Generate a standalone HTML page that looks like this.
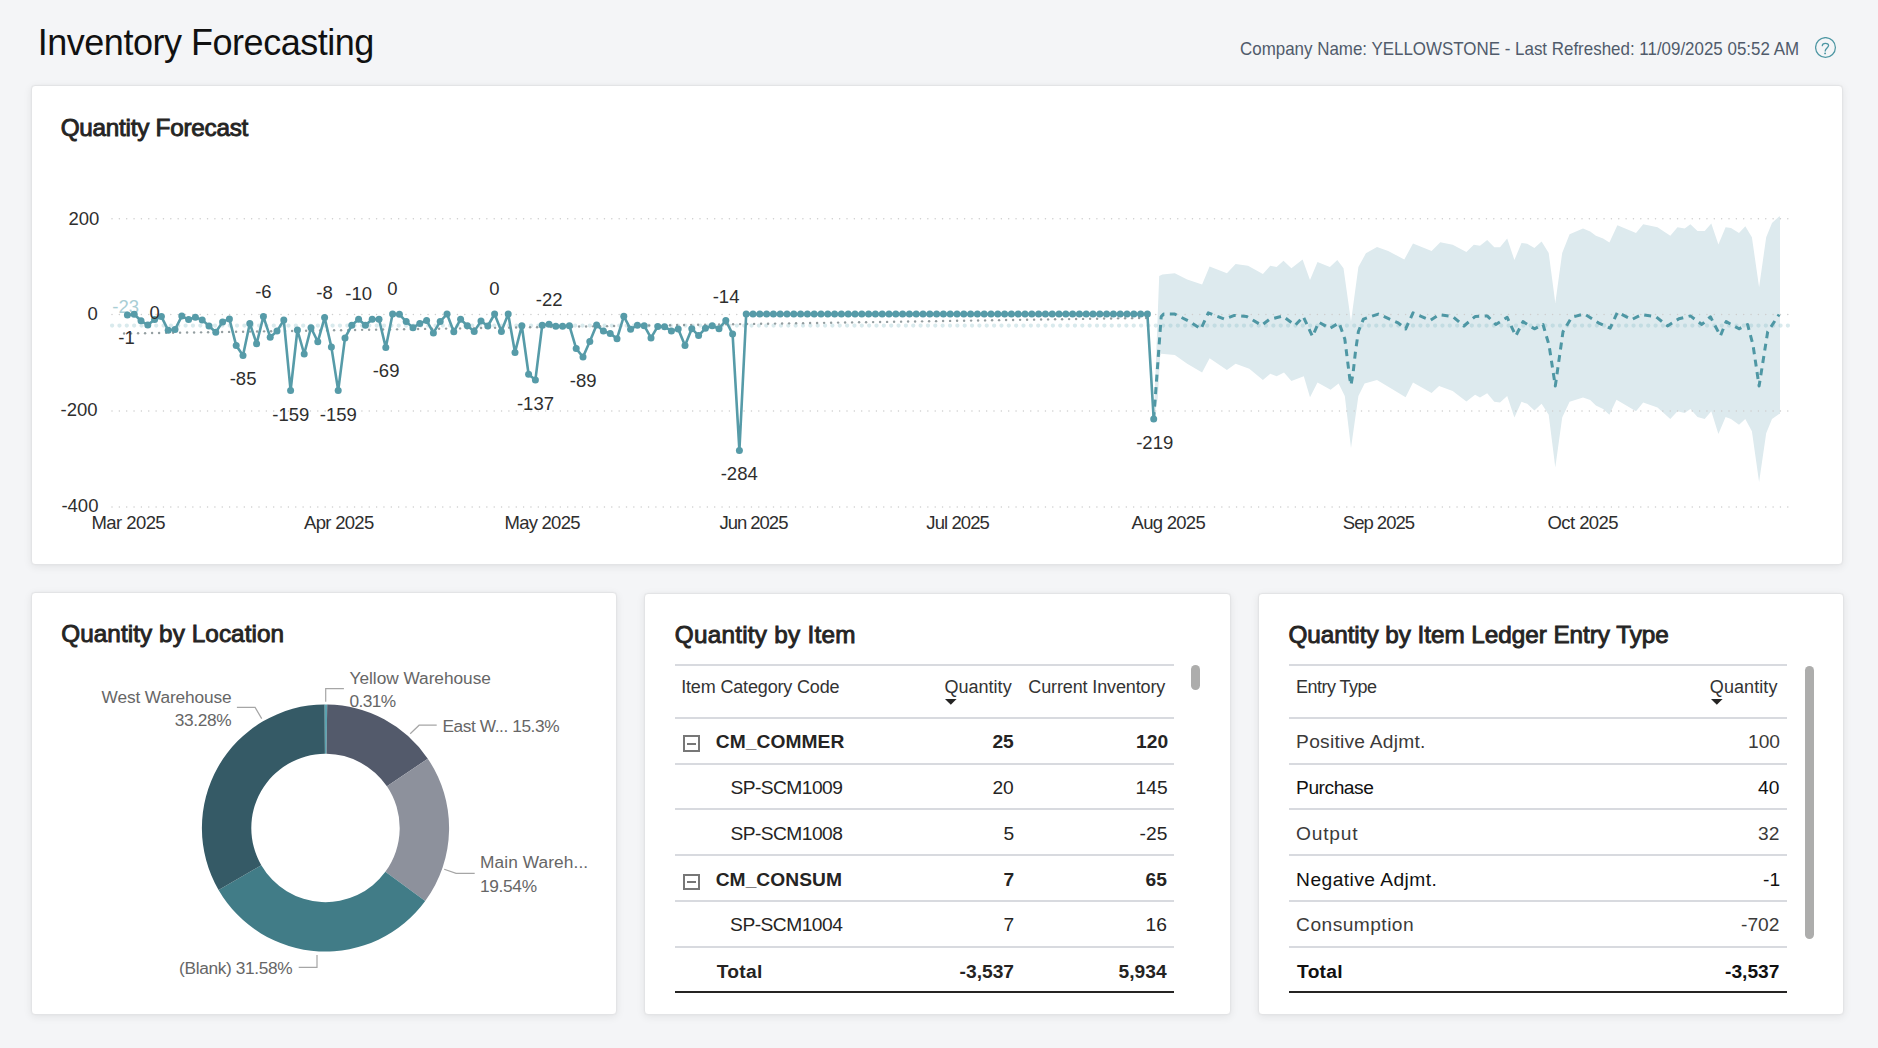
<!DOCTYPE html>
<html><head><meta charset="utf-8"><title>Inventory Forecasting</title><style>
*{margin:0;padding:0;box-sizing:border-box}
html,body{width:1878px;height:1048px;overflow:hidden;background:#F4F5F7;font-family:"Liberation Sans", sans-serif;}
.card{position:absolute;background:#fff;border:1px solid #E3E4E6;border-radius:4px;box-shadow:0 2px 8px rgba(0,0,0,0.075),0 0 2px rgba(0,0,0,0.03);}
.t{position:absolute;white-space:nowrap;line-height:1;}
svg text{font-family:"Liberation Sans", sans-serif;}
.ax{font-size:17px;fill:#333;}
.dl{font-size:16.7px;fill:#252423;}
.pl{font-size:17px;fill:#666;}
.ttl{font-size:23px;font-weight:700;color:#252423;}
.ln{position:absolute;}
.cell{position:absolute;white-space:nowrap;line-height:1;font-size:18px;color:#252423;}
</style></head>
<body>
<div class="card" style="left:31px;top:85px;width:1812.0px;height:480.0px"></div><div class="card" style="left:31px;top:592px;width:586.0px;height:423.0px"></div><div class="card" style="left:644px;top:593px;width:587.0px;height:422.0px"></div><div class="card" style="left:1258px;top:593px;width:586.0px;height:422.0px"></div><div class="t" style="left:112.3px;top:298.34px;font-size:18.5px;color:#A9CED5;">-23</div><svg style="position:absolute;left:0;top:0" width="1878" height="1048" viewBox="0 0 1878 1048"><path d="M1153.7,419.5 L1159.2,276.0 L1162.4,274.4 L1174.8,273.2 L1187.2,279.4 L1202.1,284.4 L1209.6,266.5 L1226.9,273.2 L1235.6,264.0 L1248.0,265.8 L1262.9,273.9 L1270.3,265.8 L1276.6,267.0 L1283.5,260.8 L1291.4,268.2 L1302.6,259.6 L1310.0,279.9 L1317.5,262.0 L1329.9,267.0 L1337.3,260.0 L1343.5,268.2 L1351.0,321.6 L1358.4,267.0 L1365.9,253.3 L1377.0,247.1 L1388.2,250.9 L1404.3,259.6 L1413.0,243.4 L1431.6,250.9 L1440.3,242.2 L1452.7,244.7 L1466.4,252.1 L1473.8,244.7 L1480.0,245.8 L1487.2,240.1 L1494.3,247.2 L1500.0,247.2 L1507.2,238.6 L1514.4,260.1 L1521.5,242.9 L1527.2,243.8 L1534.4,248.1 L1541.6,241.5 L1548.7,252.9 L1555.3,303.0 L1562.2,252.9 L1569.6,234.3 L1583.0,228.6 L1590.2,231.5 L1595.9,235.8 L1603.1,238.6 L1609.4,242.4 L1617.4,225.2 L1636.0,232.9 L1643.2,224.3 L1657.5,227.2 L1670.3,235.8 L1677.5,227.2 L1684.7,228.6 L1690.4,224.3 L1697.5,230.9 L1704.7,230.9 L1711.3,223.5 L1718.4,244.4 L1725.6,227.2 L1731.0,228.0 L1739.0,232.9 L1745.3,226.3 L1751.9,237.2 L1759.1,287.3 L1766.2,237.2 L1772.0,222.9 L1779.1,216.6 L1780.0,216.6 L1780.0,414.1 L1779.1,414.1 L1772.0,419.0 L1766.2,433.3 L1759.1,481.9 L1751.9,431.3 L1745.3,419.0 L1739.0,424.7 L1731.0,419.0 L1725.6,417.0 L1718.4,434.1 L1711.3,411.2 L1704.7,419.0 L1697.5,417.0 L1690.4,408.9 L1684.7,413.0 L1677.5,411.2 L1670.3,419.0 L1657.5,407.5 L1643.2,402.6 L1636.0,411.2 L1616.5,399.8 L1609.4,414.7 L1603.1,409.0 L1595.9,405.5 L1590.2,400.0 L1583.0,397.5 L1569.6,401.8 L1562.2,417.5 L1555.3,467.6 L1548.7,414.7 L1541.6,403.8 L1534.4,410.4 L1527.2,403.8 L1521.5,401.8 L1514.4,417.5 L1507.2,396.0 L1500.0,402.6 L1494.3,401.8 L1487.2,393.2 L1480.0,397.5 L1475.1,394.8 L1466.4,401.5 L1452.7,391.1 L1439.1,386.1 L1431.6,393.0 L1413.0,382.4 L1405.6,397.3 L1392.0,389.1 L1377.0,379.9 L1364.6,383.6 L1358.4,396.0 L1351.0,448.1 L1344.8,396.0 L1338.6,383.6 L1330.6,389.8 L1317.5,382.4 L1310.0,397.3 L1303.8,376.2 L1291.4,381.1 L1284.0,372.5 L1276.6,376.2 L1270.3,373.7 L1262.9,379.9 L1249.3,368.7 L1235.6,363.8 L1226.9,370.0 L1209.6,358.3 L1202.1,372.5 L1187.2,363.8 L1174.8,355.1 L1161.2,353.8 L1160.2,356.0 L1157.8,398.0 L1153.7,419.5 Z" fill="#DDEAEE"/><line x1="112" y1="218.7" x2="1792" y2="218.7" stroke="#CDCDCD" stroke-width="1.5" stroke-linecap="round" stroke-dasharray="0 7.35"/><line x1="112" y1="314.6" x2="1792" y2="314.6" stroke="#CDCDCD" stroke-width="1.5" stroke-linecap="round" stroke-dasharray="0 7.35"/><line x1="112" y1="410.9" x2="1792" y2="410.9" stroke="#CDCDCD" stroke-width="1.5" stroke-linecap="round" stroke-dasharray="0 7.35"/><line x1="112" y1="507.1" x2="1792" y2="507.1" stroke="#CDCDCD" stroke-width="1.5" stroke-linecap="round" stroke-dasharray="0 7.35"/><line x1="112.1" y1="325.6" x2="1792" y2="325.6" stroke="rgb(145,192,203)" stroke-opacity="0.34" stroke-width="4.3" stroke-linecap="round" stroke-dasharray="0 7.35"/><g fill="#7A878A" opacity="0.8"><circle cx="124.1" cy="333.50" r="1.2"/><circle cx="131.1" cy="333.39" r="1.2"/><circle cx="138.1" cy="333.29" r="1.2"/><circle cx="145.1" cy="333.18" r="1.2"/><circle cx="152.1" cy="333.07" r="1.2"/><circle cx="159.1" cy="332.97" r="1.2"/><circle cx="166.1" cy="332.86" r="1.2"/><circle cx="173.1" cy="332.75" r="1.2"/><circle cx="180.1" cy="332.65" r="1.2"/><circle cx="187.1" cy="332.54" r="1.2"/><circle cx="194.1" cy="332.43" r="1.2"/><circle cx="201.1" cy="332.33" r="1.2"/><circle cx="208.1" cy="332.22" r="1.2"/><circle cx="215.1" cy="332.11" r="1.2"/><circle cx="222.1" cy="332.01" r="1.2"/><circle cx="229.1" cy="331.90" r="1.2"/><circle cx="236.1" cy="331.79" r="1.2"/><circle cx="243.1" cy="331.69" r="1.2"/><circle cx="250.1" cy="331.58" r="1.2"/><circle cx="257.1" cy="331.47" r="1.2"/><circle cx="264.1" cy="331.37" r="1.2"/><circle cx="271.1" cy="331.26" r="1.2"/><circle cx="278.1" cy="331.15" r="1.2"/><circle cx="285.1" cy="331.05" r="1.2"/><circle cx="292.1" cy="330.94" r="1.2"/><circle cx="299.1" cy="330.83" r="1.2"/><circle cx="306.1" cy="330.73" r="1.2"/><circle cx="313.1" cy="330.62" r="1.2"/><circle cx="320.1" cy="330.51" r="1.2"/><circle cx="327.1" cy="330.41" r="1.2"/><circle cx="334.1" cy="330.30" r="1.2"/><circle cx="341.1" cy="330.19" r="1.2"/><circle cx="348.1" cy="330.09" r="1.2"/><circle cx="355.1" cy="329.98" r="1.2"/><circle cx="362.1" cy="329.87" r="1.2"/><circle cx="369.1" cy="329.77" r="1.2"/><circle cx="376.1" cy="329.66" r="1.2"/><circle cx="383.1" cy="329.55" r="1.2"/><circle cx="390.1" cy="329.45" r="1.2"/><circle cx="397.1" cy="329.34" r="1.2"/><circle cx="404.1" cy="329.23" r="1.2"/><circle cx="411.1" cy="329.13" r="1.2"/><circle cx="418.1" cy="329.02" r="1.2"/><circle cx="425.1" cy="328.91" r="1.2"/><circle cx="432.1" cy="328.81" r="1.2"/><circle cx="439.1" cy="328.70" r="1.2"/><circle cx="446.1" cy="328.59" r="1.2"/><circle cx="453.1" cy="328.49" r="1.2"/><circle cx="460.1" cy="328.38" r="1.2"/><circle cx="467.1" cy="328.27" r="1.2"/><circle cx="474.1" cy="328.17" r="1.2"/><circle cx="481.1" cy="328.06" r="1.2"/><circle cx="488.1" cy="327.95" r="1.2"/><circle cx="495.1" cy="327.85" r="1.2"/><circle cx="502.1" cy="327.74" r="1.2"/><circle cx="509.1" cy="327.63" r="1.2"/><circle cx="516.1" cy="327.53" r="1.2"/><circle cx="523.1" cy="327.42" r="1.2"/><circle cx="530.1" cy="327.31" r="1.2"/><circle cx="537.1" cy="327.21" r="1.2"/><circle cx="544.1" cy="327.10" r="1.2"/><circle cx="551.1" cy="326.99" r="1.2"/><circle cx="558.1" cy="326.89" r="1.2"/><circle cx="565.1" cy="326.78" r="1.2"/><circle cx="572.1" cy="326.67" r="1.2"/><circle cx="579.1" cy="326.57" r="1.2"/><circle cx="586.1" cy="326.46" r="1.2"/><circle cx="593.1" cy="326.35" r="1.2"/><circle cx="600.1" cy="326.25" r="1.2"/><circle cx="607.1" cy="326.14" r="1.2"/><circle cx="614.1" cy="326.03" r="1.2"/><circle cx="621.1" cy="325.93" r="1.2"/><circle cx="628.1" cy="325.82" r="1.2"/><circle cx="635.1" cy="325.71" r="1.2"/><circle cx="642.1" cy="325.61" r="1.2"/><circle cx="649.1" cy="325.50" r="1.2"/><circle cx="656.1" cy="325.39" r="1.2"/><circle cx="663.1" cy="325.29" r="1.2"/><circle cx="670.1" cy="325.18" r="1.2"/><circle cx="677.1" cy="325.07" r="1.2"/><circle cx="684.1" cy="324.97" r="1.2"/><circle cx="691.1" cy="324.86" r="1.2"/><circle cx="698.1" cy="324.75" r="1.2"/><circle cx="705.1" cy="324.65" r="1.2"/><circle cx="712.1" cy="324.54" r="1.2"/><circle cx="719.1" cy="324.43" r="1.2"/><circle cx="726.1" cy="324.33" r="1.2"/><circle cx="733.1" cy="324.22" r="1.2"/><circle cx="740.1" cy="324.11" r="1.2"/><circle cx="747.1" cy="324.01" r="1.2"/><circle cx="754.1" cy="323.90" r="1.2"/><circle cx="761.1" cy="323.79" r="1.2"/><circle cx="768.1" cy="323.69" r="1.2"/><circle cx="775.1" cy="323.58" r="1.2"/><circle cx="782.1" cy="323.47" r="1.2"/><circle cx="789.1" cy="323.37" r="1.2"/><circle cx="796.1" cy="323.26" r="1.2"/><circle cx="803.1" cy="323.15" r="1.2"/><circle cx="810.1" cy="323.05" r="1.2"/><circle cx="817.1" cy="322.94" r="1.2"/><circle cx="824.1" cy="322.83" r="1.2"/><circle cx="831.1" cy="322.73" r="1.2"/><circle cx="838.1" cy="322.62" r="1.2"/><circle cx="845.1" cy="322.51" r="1.2"/><circle cx="852.1" cy="322.41" r="1.2"/><circle cx="859.1" cy="322.30" r="1.2"/><circle cx="866.1" cy="322.19" r="1.2"/><circle cx="873.1" cy="322.09" r="1.2"/><circle cx="880.1" cy="321.98" r="1.2"/><circle cx="887.1" cy="321.88" r="1.2"/><circle cx="894.1" cy="321.77" r="1.2"/><circle cx="901.1" cy="321.66" r="1.2"/><circle cx="908.1" cy="321.56" r="1.2"/><circle cx="915.1" cy="321.45" r="1.2"/><circle cx="922.1" cy="321.34" r="1.2"/><circle cx="929.1" cy="321.24" r="1.2"/><circle cx="936.1" cy="321.13" r="1.2"/><circle cx="943.1" cy="321.02" r="1.2"/><circle cx="950.1" cy="320.92" r="1.2"/><circle cx="957.1" cy="320.81" r="1.2"/><circle cx="964.1" cy="320.70" r="1.2"/><circle cx="971.1" cy="320.60" r="1.2"/><circle cx="978.1" cy="320.49" r="1.2"/><circle cx="985.1" cy="320.38" r="1.2"/><circle cx="992.1" cy="320.28" r="1.2"/><circle cx="999.1" cy="320.17" r="1.2"/><circle cx="1006.1" cy="320.06" r="1.2"/><circle cx="1013.1" cy="319.96" r="1.2"/><circle cx="1020.1" cy="319.85" r="1.2"/><circle cx="1027.1" cy="319.74" r="1.2"/><circle cx="1034.1" cy="319.64" r="1.2"/><circle cx="1041.1" cy="319.53" r="1.2"/><circle cx="1048.1" cy="319.42" r="1.2"/><circle cx="1055.1" cy="319.32" r="1.2"/><circle cx="1062.1" cy="319.21" r="1.2"/><circle cx="1069.1" cy="319.10" r="1.2"/><circle cx="1076.1" cy="319.00" r="1.2"/><circle cx="1083.1" cy="318.89" r="1.2"/><circle cx="1090.1" cy="318.78" r="1.2"/><circle cx="1097.1" cy="318.68" r="1.2"/><circle cx="1104.1" cy="318.57" r="1.2"/><circle cx="1111.1" cy="318.46" r="1.2"/><circle cx="1118.1" cy="318.36" r="1.2"/><circle cx="1125.1" cy="318.25" r="1.2"/><circle cx="1132.1" cy="318.14" r="1.2"/><circle cx="1139.1" cy="318.04" r="1.2"/><circle cx="1146.1" cy="317.93" r="1.2"/></g><path d="M1153.7,419.1 L1161.2,316.6 L1163.6,314.1 L1174.8,314.1 L1189.7,321.6 L1200.9,329.0 L1208.3,312.9 L1224.4,319.1 L1234.4,315.4 L1246.8,316.6 L1261.7,325.3 L1269.1,319.6 L1282.8,316.1 L1295.2,325.3 L1303.3,316.6 L1312.5,336.5 L1318.7,322.1 L1329.9,328.5 L1339.1,322.8 L1344.8,339.0 L1347.3,358.8 L1349.8,378.7 L1351.0,384.9 L1353.0,373.7 L1355.5,351.4 L1358.4,331.5 L1363.4,319.1 L1378.3,314.1 L1398.1,322.8 L1405.6,329.0 L1413.0,312.9 L1430.4,320.3 L1439.1,314.6 L1452.7,316.6 L1463.9,326.0 L1475.1,316.6 L1487.2,315.9 L1495.8,324.5 L1507.2,317.3 L1515.8,335.9 L1523.0,321.6 L1534.4,328.8 L1543.0,324.5 L1549.0,345.0 L1555.3,386.0 L1563.0,331.7 L1571.6,317.3 L1584.5,313.9 L1598.8,323.1 L1610.2,328.2 L1617.4,312.2 L1631.7,319.6 L1641.7,314.5 L1656.0,316.8 L1667.5,325.9 L1678.9,318.8 L1690.4,315.9 L1701.8,324.5 L1710.4,316.8 L1720.4,335.9 L1726.2,321.6 L1739.0,328.8 L1747.6,324.5 L1753.0,345.0 L1759.1,386.0 L1767.7,331.7 L1779.1,314.5" fill="none" stroke="#4E97A4" stroke-width="3" stroke-dasharray="7 5.5" stroke-linejoin="round" stroke-linecap="butt"/><path d="M127.4,315.0 L134.2,314.3 L141.0,320.8 L147.8,325.0 L154.6,319.6 L161.4,316.6 L168.2,330.3 L175.0,329.5 L181.8,316.1 L188.6,319.6 L195.4,317.3 L202.2,319.9 L209.0,326.0 L215.8,332.3 L222.6,321.9 L229.4,318.9 L236.2,345.6 L243.0,355.5 L249.8,323.4 L256.6,343.7 L263.4,316.6 L270.2,337.2 L277.0,331.1 L283.8,320.1 L290.6,390.6 L297.4,330.0 L304.2,354.0 L311.0,327.7 L317.8,341.8 L324.6,317.6 L331.4,347.1 L338.2,390.6 L345.0,337.9 L351.8,325.3 L358.6,319.2 L365.4,325.3 L372.2,319.2 L379.0,319.2 L385.8,347.6 L392.6,314.0 L399.4,314.3 L406.2,321.6 L413.0,327.7 L419.8,323.4 L426.6,320.4 L433.4,332.9 L440.2,321.6 L447.0,314.0 L453.8,331.8 L460.6,319.2 L467.4,325.7 L474.2,331.4 L481.0,321.1 L487.8,326.0 L494.6,314.0 L501.4,331.4 L508.2,314.0 L515.0,352.4 L521.8,325.7 L528.6,374.3 L535.4,379.9 L542.2,325.3 L549.0,324.2 L555.8,326.2 L562.6,326.2 L569.4,325.7 L576.2,348.6 L583.0,357.0 L589.8,341.5 L596.6,325.0 L603.4,331.1 L610.2,333.4 L617.0,338.7 L623.8,316.3 L630.6,329.2 L637.4,325.3 L644.2,325.7 L651.0,337.9 L657.8,326.4 L664.6,326.7 L671.4,331.0 L678.2,328.9 L685.0,345.5 L691.8,328.7 L698.6,335.6 L705.4,328.3 L712.2,325.8 L719.0,328.7 L725.8,320.5 L732.6,334.1 L739.4,450.4 L746.2,314.0 L753.0,314.1 L759.8,314.1 L766.6,314.1 L773.4,314.1 L780.2,314.1 L787.0,314.1 L793.8,314.1 L800.6,314.1 L807.4,314.1 L814.2,314.1 L821.0,314.1 L827.8,314.1 L834.6,314.1 L841.4,314.1 L848.2,314.1 L855.0,314.1 L861.8,314.1 L868.6,314.1 L875.4,314.1 L882.2,314.1 L889.0,314.1 L895.8,314.1 L902.6,314.1 L909.4,314.1 L916.2,314.1 L923.0,314.1 L929.8,314.1 L936.6,314.1 L943.4,314.1 L950.2,314.1 L957.0,314.1 L963.8,314.1 L970.6,314.1 L977.4,314.1 L984.2,314.1 L991.0,314.1 L997.8,314.1 L1004.6,314.1 L1011.4,314.1 L1018.2,314.1 L1025.0,314.1 L1031.8,314.1 L1038.6,314.1 L1045.4,314.1 L1052.2,314.1 L1059.0,314.1 L1065.8,314.1 L1072.6,314.1 L1079.4,314.1 L1086.2,314.1 L1093.0,314.1 L1099.8,314.1 L1106.6,314.1 L1113.4,314.1 L1120.2,314.1 L1127.0,314.1 L1133.8,314.1 L1140.6,314.1 L1147.4,314.1 L1153.7,419.1" fill="none" stroke="#569BA8" stroke-width="2.6" stroke-linejoin="round"/><g fill="#569BA8"><circle cx="127.4" cy="315.0" r="3.5"/><circle cx="134.2" cy="314.3" r="3.5"/><circle cx="141.0" cy="320.8" r="3.5"/><circle cx="147.8" cy="325.0" r="3.5"/><circle cx="154.6" cy="319.6" r="3.5"/><circle cx="161.4" cy="316.6" r="3.5"/><circle cx="168.2" cy="330.3" r="3.5"/><circle cx="175.0" cy="329.5" r="3.5"/><circle cx="181.8" cy="316.1" r="3.5"/><circle cx="188.6" cy="319.6" r="3.5"/><circle cx="195.4" cy="317.3" r="3.5"/><circle cx="202.2" cy="319.9" r="3.5"/><circle cx="209.0" cy="326.0" r="3.5"/><circle cx="215.8" cy="332.3" r="3.5"/><circle cx="222.6" cy="321.9" r="3.5"/><circle cx="229.4" cy="318.9" r="3.5"/><circle cx="236.2" cy="345.6" r="3.5"/><circle cx="243.0" cy="355.5" r="3.5"/><circle cx="249.8" cy="323.4" r="3.5"/><circle cx="256.6" cy="343.7" r="3.5"/><circle cx="263.4" cy="316.6" r="3.5"/><circle cx="270.2" cy="337.2" r="3.5"/><circle cx="277.0" cy="331.1" r="3.5"/><circle cx="283.8" cy="320.1" r="3.5"/><circle cx="290.6" cy="390.6" r="3.5"/><circle cx="297.4" cy="330.0" r="3.5"/><circle cx="304.2" cy="354.0" r="3.5"/><circle cx="311.0" cy="327.7" r="3.5"/><circle cx="317.8" cy="341.8" r="3.5"/><circle cx="324.6" cy="317.6" r="3.5"/><circle cx="331.4" cy="347.1" r="3.5"/><circle cx="338.2" cy="390.6" r="3.5"/><circle cx="345.0" cy="337.9" r="3.5"/><circle cx="351.8" cy="325.3" r="3.5"/><circle cx="358.6" cy="319.2" r="3.5"/><circle cx="365.4" cy="325.3" r="3.5"/><circle cx="372.2" cy="319.2" r="3.5"/><circle cx="379.0" cy="319.2" r="3.5"/><circle cx="385.8" cy="347.6" r="3.5"/><circle cx="392.6" cy="314.0" r="3.5"/><circle cx="399.4" cy="314.3" r="3.5"/><circle cx="406.2" cy="321.6" r="3.5"/><circle cx="413.0" cy="327.7" r="3.5"/><circle cx="419.8" cy="323.4" r="3.5"/><circle cx="426.6" cy="320.4" r="3.5"/><circle cx="433.4" cy="332.9" r="3.5"/><circle cx="440.2" cy="321.6" r="3.5"/><circle cx="447.0" cy="314.0" r="3.5"/><circle cx="453.8" cy="331.8" r="3.5"/><circle cx="460.6" cy="319.2" r="3.5"/><circle cx="467.4" cy="325.7" r="3.5"/><circle cx="474.2" cy="331.4" r="3.5"/><circle cx="481.0" cy="321.1" r="3.5"/><circle cx="487.8" cy="326.0" r="3.5"/><circle cx="494.6" cy="314.0" r="3.5"/><circle cx="501.4" cy="331.4" r="3.5"/><circle cx="508.2" cy="314.0" r="3.5"/><circle cx="515.0" cy="352.4" r="3.5"/><circle cx="521.8" cy="325.7" r="3.5"/><circle cx="528.6" cy="374.3" r="3.5"/><circle cx="535.4" cy="379.9" r="3.5"/><circle cx="542.2" cy="325.3" r="3.5"/><circle cx="549.0" cy="324.2" r="3.5"/><circle cx="555.8" cy="326.2" r="3.5"/><circle cx="562.6" cy="326.2" r="3.5"/><circle cx="569.4" cy="325.7" r="3.5"/><circle cx="576.2" cy="348.6" r="3.5"/><circle cx="583.0" cy="357.0" r="3.5"/><circle cx="589.8" cy="341.5" r="3.5"/><circle cx="596.6" cy="325.0" r="3.5"/><circle cx="603.4" cy="331.1" r="3.5"/><circle cx="610.2" cy="333.4" r="3.5"/><circle cx="617.0" cy="338.7" r="3.5"/><circle cx="623.8" cy="316.3" r="3.5"/><circle cx="630.6" cy="329.2" r="3.5"/><circle cx="637.4" cy="325.3" r="3.5"/><circle cx="644.2" cy="325.7" r="3.5"/><circle cx="651.0" cy="337.9" r="3.5"/><circle cx="657.8" cy="326.4" r="3.5"/><circle cx="664.6" cy="326.7" r="3.5"/><circle cx="671.4" cy="331.0" r="3.5"/><circle cx="678.2" cy="328.9" r="3.5"/><circle cx="685.0" cy="345.5" r="3.5"/><circle cx="691.8" cy="328.7" r="3.5"/><circle cx="698.6" cy="335.6" r="3.5"/><circle cx="705.4" cy="328.3" r="3.5"/><circle cx="712.2" cy="325.8" r="3.5"/><circle cx="719.0" cy="328.7" r="3.5"/><circle cx="725.8" cy="320.5" r="3.5"/><circle cx="732.6" cy="334.1" r="3.5"/><circle cx="739.4" cy="450.4" r="3.5"/><circle cx="746.2" cy="314.0" r="3.5"/><circle cx="753.0" cy="314.1" r="3.5"/><circle cx="759.8" cy="314.1" r="3.5"/><circle cx="766.6" cy="314.1" r="3.5"/><circle cx="773.4" cy="314.1" r="3.5"/><circle cx="780.2" cy="314.1" r="3.5"/><circle cx="787.0" cy="314.1" r="3.5"/><circle cx="793.8" cy="314.1" r="3.5"/><circle cx="800.6" cy="314.1" r="3.5"/><circle cx="807.4" cy="314.1" r="3.5"/><circle cx="814.2" cy="314.1" r="3.5"/><circle cx="821.0" cy="314.1" r="3.5"/><circle cx="827.8" cy="314.1" r="3.5"/><circle cx="834.6" cy="314.1" r="3.5"/><circle cx="841.4" cy="314.1" r="3.5"/><circle cx="848.2" cy="314.1" r="3.5"/><circle cx="855.0" cy="314.1" r="3.5"/><circle cx="861.8" cy="314.1" r="3.5"/><circle cx="868.6" cy="314.1" r="3.5"/><circle cx="875.4" cy="314.1" r="3.5"/><circle cx="882.2" cy="314.1" r="3.5"/><circle cx="889.0" cy="314.1" r="3.5"/><circle cx="895.8" cy="314.1" r="3.5"/><circle cx="902.6" cy="314.1" r="3.5"/><circle cx="909.4" cy="314.1" r="3.5"/><circle cx="916.2" cy="314.1" r="3.5"/><circle cx="923.0" cy="314.1" r="3.5"/><circle cx="929.8" cy="314.1" r="3.5"/><circle cx="936.6" cy="314.1" r="3.5"/><circle cx="943.4" cy="314.1" r="3.5"/><circle cx="950.2" cy="314.1" r="3.5"/><circle cx="957.0" cy="314.1" r="3.5"/><circle cx="963.8" cy="314.1" r="3.5"/><circle cx="970.6" cy="314.1" r="3.5"/><circle cx="977.4" cy="314.1" r="3.5"/><circle cx="984.2" cy="314.1" r="3.5"/><circle cx="991.0" cy="314.1" r="3.5"/><circle cx="997.8" cy="314.1" r="3.5"/><circle cx="1004.6" cy="314.1" r="3.5"/><circle cx="1011.4" cy="314.1" r="3.5"/><circle cx="1018.2" cy="314.1" r="3.5"/><circle cx="1025.0" cy="314.1" r="3.5"/><circle cx="1031.8" cy="314.1" r="3.5"/><circle cx="1038.6" cy="314.1" r="3.5"/><circle cx="1045.4" cy="314.1" r="3.5"/><circle cx="1052.2" cy="314.1" r="3.5"/><circle cx="1059.0" cy="314.1" r="3.5"/><circle cx="1065.8" cy="314.1" r="3.5"/><circle cx="1072.6" cy="314.1" r="3.5"/><circle cx="1079.4" cy="314.1" r="3.5"/><circle cx="1086.2" cy="314.1" r="3.5"/><circle cx="1093.0" cy="314.1" r="3.5"/><circle cx="1099.8" cy="314.1" r="3.5"/><circle cx="1106.6" cy="314.1" r="3.5"/><circle cx="1113.4" cy="314.1" r="3.5"/><circle cx="1120.2" cy="314.1" r="3.5"/><circle cx="1127.0" cy="314.1" r="3.5"/><circle cx="1133.8" cy="314.1" r="3.5"/><circle cx="1140.6" cy="314.1" r="3.5"/><circle cx="1147.4" cy="314.1" r="3.5"/><circle cx="1153.7" cy="419.1" r="3.5"/></g><path d="M324.42,704.40 A123.6,123.6 0 0 1 327.22,704.41 L326.53,753.81 A74.2,74.2 0 0 0 324.85,753.80 Z" fill="#5BA3B0"/><path d="M327.22,704.41 A123.6,123.6 0 0 1 427.82,758.66 L386.92,786.37 A74.2,74.2 0 0 0 326.53,753.81 Z" fill="#535A6B"/><path d="M427.82,758.66 A123.6,123.6 0 0 1 425.21,901.03 L385.36,871.84 A74.2,74.2 0 0 0 386.92,786.37 Z" fill="#8D919C"/><path d="M425.21,901.03 A123.6,123.6 0 0 1 218.56,889.97 L261.30,865.20 A74.2,74.2 0 0 0 385.36,871.84 Z" fill="#417C87"/><path d="M218.56,889.97 A123.6,123.6 0 0 1 324.50,704.40 L324.90,753.80 A74.2,74.2 0 0 0 261.30,865.20 Z" fill="#355A66"/><path d="M236.9,707.4 L255.1,707.4 L261.7,718.6" fill="none" stroke="#A6A6A6" stroke-width="1.2"/><path d="M325.7,701.7 L325.7,688.6 L343.9,688.6" fill="none" stroke="#A6A6A6" stroke-width="1.2"/><path d="M410.2,733.8 L419.1,725.2 L436.7,725.2" fill="none" stroke="#A6A6A6" stroke-width="1.2"/><path d="M444.2,869.2 L456.1,873.3 L474.7,873.3" fill="none" stroke="#A6A6A6" stroke-width="1.2"/><path d="M317.0,954.9 L317.0,967.4 L298.7,967.4" fill="none" stroke="#A6A6A6" stroke-width="1.2"/></svg><svg style="position:absolute;left:1815px;top:37px" width="22" height="22" viewBox="0 0 22 22"><circle cx="10.5" cy="10.5" r="9.9" fill="none" stroke="#4E97A3" stroke-width="1.25"/><path d="M7.3,8.7 C7.3,5.7 13.6,5.4 13.6,8.6 C13.6,10.6 10.3,11.6 10.2,14" fill="none" stroke="#4E97A3" stroke-width="1.3" stroke-linecap="round"/><circle cx="10.1" cy="16.4" r="0.95" fill="#4E97A3"/></svg><div class="ln" style="left:675.1px;top:664.1px;width:498.7px;height:2px;background:#D8DADF"></div><div class="ln" style="left:675.1px;top:716.8px;width:498.7px;height:2px;background:#D8DADF"></div><div class="ln" style="left:675.1px;top:763.4px;width:498.7px;height:2px;background:#D8DADF"></div><div class="ln" style="left:675.1px;top:808.2px;width:498.7px;height:2px;background:#D8DADF"></div><div class="ln" style="left:675.1px;top:854.0px;width:498.7px;height:2px;background:#D8DADF"></div><div class="ln" style="left:675.1px;top:899.9px;width:498.7px;height:2px;background:#D8DADF"></div><div class="ln" style="left:675.1px;top:945.6px;width:498.7px;height:2px;background:#D8DADF"></div><div class="ln" style="left:675.1px;top:990.8px;width:498.7px;height:2px;background:#252423"></div><svg style="position:absolute;left:945px;top:699px" width="12" height="6"><path d="M0,0 L11.6,0 L5.8,5.8 Z" fill="#252423"/></svg><div style="position:absolute;left:683.2px;top:735.4px;width:16.5px;height:16.3px;border:2px solid #777777"></div><div style="position:absolute;left:687px;top:742.8px;width:9px;height:2px;background:#777777"></div><div style="position:absolute;left:683.2px;top:873.8px;width:16.5px;height:16.3px;border:2px solid #777777"></div><div style="position:absolute;left:687px;top:881.2px;width:9px;height:2px;background:#777777"></div><div style="position:absolute;left:1191.2px;top:665.3px;width:9.2px;height:24.5px;border-radius:4.6px;background:#ADADAC"></div><div class="ln" style="left:1289.1px;top:664.1px;width:497.7px;height:2px;background:#D8DADF"></div><div class="ln" style="left:1289.1px;top:716.8px;width:497.7px;height:2px;background:#D8DADF"></div><div class="ln" style="left:1289.1px;top:763.1px;width:497.7px;height:2px;background:#D8DADF"></div><div class="ln" style="left:1289.1px;top:808.0px;width:497.7px;height:2px;background:#D8DADF"></div><div class="ln" style="left:1289.1px;top:854.0px;width:497.7px;height:2px;background:#D8DADF"></div><div class="ln" style="left:1289.1px;top:900.1px;width:497.7px;height:2px;background:#D8DADF"></div><div class="ln" style="left:1289.1px;top:945.6px;width:497.7px;height:2px;background:#D8DADF"></div><div class="ln" style="left:1289.1px;top:990.8px;width:497.7px;height:2px;background:#252423"></div><svg style="position:absolute;left:1710.8px;top:699px" width="12" height="6"><path d="M0,0 L11.6,0 L5.8,5.8 Z" fill="#252423"/></svg><div style="position:absolute;left:1804.8px;top:665.5px;width:9.2px;height:273.1px;border-radius:4.6px;background:#ADADAC"></div><div class="t" style="left:37.7px;top:24.88px;font-size:36.0px;color:#111;letter-spacing:-0.475px;">Inventory Forecasting</div><div class="t" style="left:1240.29px;top:39.76px;font-size:18.6px;color:#505B6B;transform:scaleX(0.9106);transform-origin:0 0;">Company Name: YELLOWSTONE - Last Refreshed: 11/09/2025 05:52 AM</div><div class="t" style="left:60.7px;top:115.73px;font-size:24.3px;color:#252423;letter-spacing:-0.256px;-webkit-text-stroke:0.9px #252423;">Quantity Forecast</div><div class="t" style="left:61.2px;top:621.93px;font-size:24.3px;color:#252423;letter-spacing:0.074px;-webkit-text-stroke:0.9px #252423;">Quantity by Location</div><div class="t" style="left:674.8px;top:623.13px;font-size:24.3px;color:#252423;letter-spacing:0.247px;-webkit-text-stroke:0.9px #252423;">Quantity by Item</div><div class="t" style="left:1288.4px;top:623.03px;font-size:24.3px;color:#252423;letter-spacing:-0.042px;-webkit-text-stroke:0.9px #252423;">Quantity by Item Ledger Entry Type</div><div class="t" style="left:68.53px;top:209.64px;font-size:18.5px;color:#2E2E2E;">200</div><div class="t" style="left:87.6px;top:305.04px;font-size:18.5px;color:#2E2E2E;">0</div><div class="t" style="left:60.6px;top:401.34px;font-size:18.5px;color:#2E2E2E;">-200</div><div class="t" style="left:61.4px;top:497.44px;font-size:18.5px;color:#2E2E2E;">-400</div><div class="t" style="left:91.5px;top:514.04px;font-size:18.5px;color:#2E2E2E;letter-spacing:-0.571px;">Mar 2025</div><div class="t" style="left:304.0px;top:514.04px;font-size:18.5px;color:#2E2E2E;letter-spacing:-0.7px;">Apr 2025</div><div class="t" style="left:504.5px;top:514.04px;font-size:18.5px;color:#2E2E2E;letter-spacing:-0.757px;">May 2025</div><div class="t" style="left:719.5px;top:514.04px;font-size:18.5px;color:#2E2E2E;letter-spacing:-1.029px;">Jun 2025</div><div class="t" style="left:926.3px;top:514.04px;font-size:18.5px;color:#2E2E2E;letter-spacing:-0.914px;">Jul 2025</div><div class="t" style="left:1131.6px;top:514.04px;font-size:18.5px;color:#2E2E2E;letter-spacing:-0.729px;">Aug 2025</div><div class="t" style="left:1342.8px;top:514.04px;font-size:18.5px;color:#2E2E2E;letter-spacing:-1.0px;">Sep 2025</div><div class="t" style="left:1547.5px;top:514.04px;font-size:18.5px;color:#2E2E2E;letter-spacing:-0.571px;">Oct 2025</div><div class="t" style="left:118.35px;top:329.24px;font-size:18.5px;color:#2E2E2E;">-1</div><div class="t" style="left:149.6px;top:304.24px;font-size:18.5px;color:#2E2E2E;">0</div><div class="t" style="left:255.15px;top:283.04px;font-size:18.5px;color:#2E2E2E;">-6</div><div class="t" style="left:229.7px;top:370.14px;font-size:18.5px;color:#2E2E2E;">-85</div><div class="t" style="left:272.35px;top:405.74px;font-size:18.5px;color:#2E2E2E;">-159</div><div class="t" style="left:319.75px;top:405.74px;font-size:18.5px;color:#2E2E2E;">-159</div><div class="t" style="left:316.25px;top:284.14px;font-size:18.5px;color:#2E2E2E;">-8</div><div class="t" style="left:345.35px;top:285.34px;font-size:18.5px;color:#2E2E2E;">-10</div><div class="t" style="left:387.2px;top:280.04px;font-size:18.5px;color:#2E2E2E;">0</div><div class="t" style="left:372.7px;top:362.44px;font-size:18.5px;color:#2E2E2E;">-69</div><div class="t" style="left:489.15px;top:280.04px;font-size:18.5px;color:#2E2E2E;">0</div><div class="t" style="left:535.75px;top:291.44px;font-size:18.5px;color:#2E2E2E;">-22</div><div class="t" style="left:516.95px;top:395.04px;font-size:18.5px;color:#2E2E2E;">-137</div><div class="t" style="left:569.8px;top:372.14px;font-size:18.5px;color:#2E2E2E;">-89</div><div class="t" style="left:712.7px;top:287.64px;font-size:18.5px;color:#2E2E2E;">-14</div><div class="t" style="left:720.7px;top:465.24px;font-size:18.5px;color:#2E2E2E;">-284</div><div class="t" style="left:1136.2px;top:434.24px;font-size:18.5px;color:#2E2E2E;">-219</div><div class="t" style="left:101.6px;top:688.76px;font-size:17.3px;color:#666666;letter-spacing:-0.115px;">West Warehouse</div><div class="t" style="left:174.8px;top:712.26px;font-size:17.3px;color:#666666;letter-spacing:-0.34px;">33.28%</div><div class="t" style="left:349.6px;top:670.46px;font-size:17.3px;color:#666666;letter-spacing:-0.04px;">Yellow Warehouse</div><div class="t" style="left:349.6px;top:693.26px;font-size:17.3px;color:#666666;letter-spacing:-0.65px;">0.31%</div><div class="t" style="left:442.5px;top:718.46px;font-size:17.3px;color:#666666;letter-spacing:-0.421px;">East W... 15.3%</div><div class="t" style="left:480.0px;top:854.46px;font-size:17.3px;color:#666666;letter-spacing:0.1px;">Main Wareh...</div><div class="t" style="left:480.0px;top:878.46px;font-size:17.3px;color:#666666;letter-spacing:-0.32px;">19.54%</div><div class="t" style="left:179.1px;top:960.36px;font-size:17.3px;color:#666666;letter-spacing:-0.362px;">(Blank) 31.58%</div><div class="t" style="left:681.2px;top:678.26px;font-size:18px;color:#333;letter-spacing:-0.159px;">Item Category Code</div><div class="t" style="left:944.4px;top:678.26px;font-size:18px;color:#333;letter-spacing:0.029px;">Quantity</div><div class="t" style="left:1028.3px;top:678.26px;font-size:18px;color:#333;letter-spacing:-0.125px;">Current Inventory</div><div class="t" style="left:715.8px;top:732.25px;font-size:19.2px;color:#252423;font-weight:700;letter-spacing:0.075px;">CM_COMMER</div><div class="t" style="left:992.4px;top:732.25px;font-size:19.2px;color:#252423;font-weight:700;">25</div><div class="t" style="left:1136.1px;top:732.25px;font-size:19.2px;color:#252423;font-weight:700;">120</div><div class="t" style="left:730.4px;top:777.95px;font-size:19.2px;color:#252423;letter-spacing:-0.544px;">SP-SCM1009</div><div class="t" style="left:992.4px;top:777.95px;font-size:19.2px;color:#252423;">20</div><div class="t" style="left:1135.6px;top:777.95px;font-size:19.2px;color:#252423;">145</div><div class="t" style="left:730.4px;top:823.75px;font-size:19.2px;color:#252423;letter-spacing:-0.544px;">SP-SCM1008</div><div class="t" style="left:1003.4px;top:823.75px;font-size:19.2px;color:#252423;">5</div><div class="t" style="left:1139.6px;top:823.75px;font-size:19.2px;color:#252423;">-25</div><div class="t" style="left:715.7px;top:870.15px;font-size:19.2px;color:#252423;font-weight:700;letter-spacing:0.05px;">CM_CONSUM</div><div class="t" style="left:1003.6px;top:870.15px;font-size:19.2px;color:#252423;font-weight:700;">7</div><div class="t" style="left:1145.5px;top:870.15px;font-size:19.2px;color:#252423;font-weight:700;">65</div><div class="t" style="left:730.1px;top:915.15px;font-size:19.2px;color:#252423;letter-spacing:-0.511px;">SP-SCM1004</div><div class="t" style="left:1003.6px;top:915.15px;font-size:19.2px;color:#252423;">7</div><div class="t" style="left:1145.6px;top:915.15px;font-size:19.2px;color:#252423;">16</div><div class="t" style="left:716.7px;top:961.85px;font-size:19.2px;color:#252423;font-weight:700;letter-spacing:0.325px;">Total</div><div class="t" style="left:959.6px;top:961.85px;font-size:19.2px;color:#252423;font-weight:700;">-3,537</div><div class="t" style="left:1118.6px;top:961.85px;font-size:19.2px;color:#252423;font-weight:700;">5,934</div><div class="t" style="left:1296.0px;top:678.26px;font-size:18px;color:#333;letter-spacing:-0.522px;">Entry Type</div><div class="t" style="left:1709.8px;top:678.26px;font-size:18px;color:#333;letter-spacing:0.086px;">Quantity</div><div class="t" style="left:1296.1px;top:732.35px;font-size:19.2px;color:#3B3A39;letter-spacing:0.25px;">Positive Adjmt.</div><div class="t" style="left:1748.0px;top:732.35px;font-size:19.2px;color:#3B3A39;">100</div><div class="t" style="left:1296.1px;top:777.85px;font-size:19.2px;color:#111;letter-spacing:-0.471px;">Purchase</div><div class="t" style="left:1758.0px;top:777.85px;font-size:19.2px;color:#111;">40</div><div class="t" style="left:1296.1px;top:823.75px;font-size:19.2px;color:#3B3A39;letter-spacing:0.78px;">Output</div><div class="t" style="left:1758.0px;top:823.75px;font-size:19.2px;color:#3B3A39;">32</div><div class="t" style="left:1296.1px;top:869.55px;font-size:19.2px;color:#111;letter-spacing:0.457px;">Negative Adjmt.</div><div class="t" style="left:1763.0px;top:869.55px;font-size:19.2px;color:#111;">-1</div><div class="t" style="left:1296.1px;top:915.15px;font-size:19.2px;color:#3B3A39;letter-spacing:0.45px;">Consumption</div><div class="t" style="left:1741.0px;top:915.15px;font-size:19.2px;color:#3B3A39;">-702</div><div class="t" style="left:1297.1px;top:961.85px;font-size:19.2px;color:#111;font-weight:700;letter-spacing:0.25px;">Total</div><div class="t" style="left:1725.0px;top:961.85px;font-size:19.2px;color:#111;font-weight:700;">-3,537</div>
</body></html>
